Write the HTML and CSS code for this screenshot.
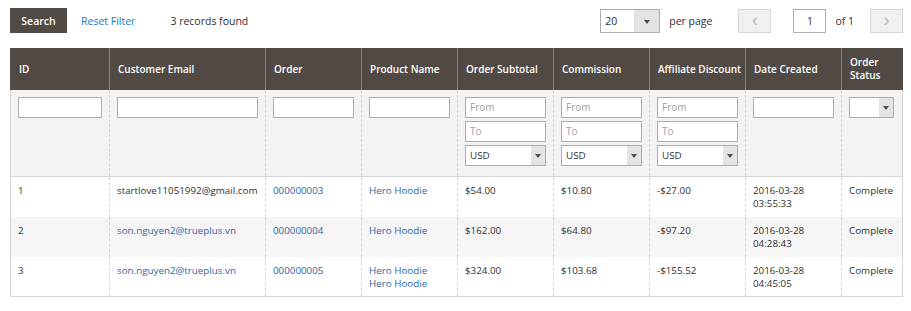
FILE: index.html
```html
<!DOCTYPE html>
<html>
  <head>
    <title>Affiliate Transactions</title>
    <link rel="stylesheet" href="styles.css">
  </head>
  <body>
    <div class="grid">
      <div class="toolbar">
        <div class="toolbar-left">
          <button class="btn-search">Search</button>
          <a class="reset" href="#">Reset Filter</a>
          <span class="count">3 records found</span>
        </div>
        <div class="toolbar-right">
          <div class="select limit"><span>20</span><i class="arrow"></i></div>
          <span class="per-page">per page</span>
          <button class="pager-btn">&lsaquo;</button>
          <input class="page-input" type="text" value="1">
          <span class="of">of 1</span>
          <button class="pager-btn">&rsaquo;</button>
        </div>
      </div>

      <table class="data-grid">
        <colgroup>
          <col style="width:99px">
          <col style="width:156px">
          <col style="width:96px">
          <col style="width:96px">
          <col style="width:96px">
          <col style="width:96px">
          <col style="width:96px">
          <col style="width:96px">
          <col style="width:61px">
        </colgroup>
        <thead>
          <tr class="headings">
            <th>ID</th>
            <th>Customer Email</th>
            <th>Order</th>
            <th>Product Name</th>
            <th>Order Subtotal</th>
            <th>Commission</th>
            <th class="nowrap">Affiliate Discount</th>
            <th>Date Created</th>
            <th>Order Status</th>
          </tr>
          <tr class="filters">
            <td><input type="text"></td>
            <td><input type="text"></td>
            <td><input type="text"></td>
            <td><input type="text"></td>
            <td>
              <input type="text" placeholder="From">
              <input type="text" placeholder="To">
              <div class="select"><span>USD</span><i class="arrow"></i></div>
            </td>
            <td>
              <input type="text" placeholder="From">
              <input type="text" placeholder="To">
              <div class="select"><span>USD</span><i class="arrow"></i></div>
            </td>
            <td>
              <input type="text" placeholder="From">
              <input type="text" placeholder="To">
              <div class="select"><span>USD</span><i class="arrow"></i></div>
            </td>
            <td><input type="text"></td>
            <td><div class="select status"><span></span><i class="arrow"></i></div></td>
          </tr>
        </thead>
        <tbody>
          <tr>
            <td>1</td>
            <td>startlove11051992@gmail.com</td>
            <td><a href="#">000000003</a></td>
            <td><a href="#">Hero Hoodie</a></td>
            <td>$54.00</td>
            <td>$10.80</td>
            <td>-$27.00</td>
            <td>2016-03-28<br>03:55:33</td>
            <td>Complete</td>
          </tr>
          <tr class="even">
            <td>2</td>
            <td><a href="#">son.nguyen2@trueplus.vn</a></td>
            <td><a href="#">000000004</a></td>
            <td><a href="#">Hero Hoodie</a></td>
            <td>$162.00</td>
            <td>$64.80</td>
            <td>-$97.20</td>
            <td>2016-03-28<br>04:28:43</td>
            <td>Complete</td>
          </tr>
          <tr>
            <td>3</td>
            <td><a href="#">son.nguyen2@trueplus.vn</a></td>
            <td><a href="#">000000005</a></td>
            <td><a href="#">Hero Hoodie</a><br><a href="#">Hero Hoodie</a></td>
            <td>$324.00</td>
            <td>$103.68</td>
            <td>-$155.52</td>
            <td>2016-03-28<br>04:45:05</td>
            <td>Complete</td>
          </tr>
        </tbody>
      </table>
    </div>
  </body>
</html>
```

FILE: styles.css
```css
* {
  box-sizing: border-box;
}

body {
  margin: 0;
  padding: 0;
  font-family: "Open Sans", Arial, sans-serif;
  font-size: 9.8px;
  color: #303030;
  background: #fff;
}

a {
  color: #1979c3;
  text-decoration: none;
}

.grid {
  padding: 8px 8px 0 10px;
}

.toolbar {
  display: flex;
  justify-content: space-between;
  align-items: center;
  height: 25px;
  margin-bottom: 15px;
}

.toolbar-left,
.toolbar-right {
  display: flex;
  align-items: center;
}

.btn-search {
  height: 25px;
  width: 57px;
  padding: 0;
  border: none;
  background: #514943;
  color: #fff;
  font-family: inherit;
  font-size: 10.5px;
  font-weight: 600;
}

.reset {
  margin-left: 14px;
  font-size: 10.5px;
}

.count {
  margin-left: 35px;
  font-size: 10.5px;
}

.select {
  position: relative;
  display: flex;
  align-items: center;
  height: 21px;
  width: 81px;
  padding-left: 4px;
  border: 1px solid #adadad;
  background: #fff;
  color: #303030;
}

.select .arrow {
  position: absolute;
  top: 0;
  right: 0;
  bottom: 0;
  width: 14px;
  background: #e3e3e3;
}

.select .arrow::after {
  content: "";
  position: absolute;
  left: 4px;
  top: 8px;
  border-left: 3px solid transparent;
  border-right: 3px solid transparent;
  border-top: 4px solid #514943;
}

.select.limit {
  width: 60px;
  height: 24px;
  margin-right: 9px;
  font-size: 10.5px;
}

.select.limit .arrow {
  width: 25px;
}

.select.limit .arrow::after {
  left: 10px;
  top: 10px;
}

.per-page {
  margin-right: 26px;
  font-size: 10.5px;
}

.pager-btn {
  width: 33px;
  height: 24px;
  padding: 0 0 2px;
  border: 1px solid #d6d6d6;
  background: #f0f0f0;
  color: #b7b7b7;
  font-size: 18px;
  line-height: 1;
}

.page-input {
  width: 33px;
  height: 24px;
  margin-left: 22px;
  margin-right: 9px;
  border: 1px solid #adadad;
  text-align: center;
  font-family: inherit;
  font-size: 10.5px;
  color: #303030;
}

.of {
  margin-right: 16px;
  font-size: 10.5px;
}

.data-grid {
  width: 892px;
  table-layout: fixed;
  border-collapse: collapse;
  border: 1px solid #d6d6d6;
}

.data-grid th {
  height: 41px;
  padding: 3px 4px 3px 8px;
  background: #514943;
  color: #fff;
  font-size: 10px;
  font-weight: 600;
  text-align: left;
  line-height: 13px;
  border-left: 1px solid #8a837f;
  border-right: 1px solid #8a837f;
  border-top: 1px solid #514943;
}

.data-grid th.nowrap {
  white-space: nowrap;
  padding-right: 0;
}

.data-grid th:first-child {
  border-left-color: #514943;
}

.data-grid th:last-child {
  border-right-color: #514943;
}

.data-grid td {
  padding: 7px 7px 4px;
  vertical-align: top;
  line-height: 13px;
  border-left: 1px dashed #d6d6d6;
  border-right: 1px dashed #d6d6d6;
}

.data-grid td a {
  color: #2d66a0;
}

.data-grid tbody tr {
  height: 40px;
}

.data-grid tr.even td {
  background: #f5f5f5;
}

.filters td {
  height: 87px;
  padding: 7px 7px 8px;
  background: #f3f3f3;
  border-bottom: 1px solid #d6d6d6;
}

.filters input {
  display: block;
  width: 100%;
  height: 21px;
  margin: 0 0 3px;
  padding: 0 4px;
  border: 1px solid #adadad;
  background: #fff;
  font-family: inherit;
  font-size: 10px;
  color: #303030;
}

.filters input::placeholder {
  color: #a0a0a0;
}

.filters .select {
  width: 100%;
}

.filters .select.status {
  width: 45px;
}
```
